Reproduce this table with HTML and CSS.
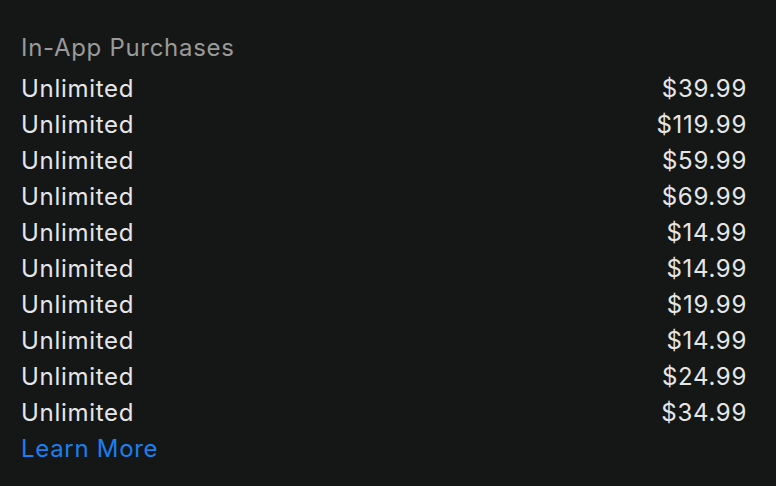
FILE: index.html
```html
<!DOCTYPE html>
<html>
<head>
<meta charset="utf-8">
<link rel="stylesheet" href="styles.css">
</head>
<body>
<section class="iap">
  <h2 class="iap-title">In-App Purchases</h2>
  <ul class="iap-list">
    <li class="iap-row"><span>Unlimited</span><span>$39.99</span></li>
    <li class="iap-row"><span>Unlimited</span><span>$119.99</span></li>
    <li class="iap-row"><span>Unlimited</span><span>$59.99</span></li>
    <li class="iap-row"><span>Unlimited</span><span>$69.99</span></li>
    <li class="iap-row"><span>Unlimited</span><span>$14.99</span></li>
    <li class="iap-row"><span>Unlimited</span><span>$14.99</span></li>
    <li class="iap-row"><span>Unlimited</span><span>$19.99</span></li>
    <li class="iap-row"><span>Unlimited</span><span>$14.99</span></li>
    <li class="iap-row"><span>Unlimited</span><span>$24.99</span></li>
    <li class="iap-row"><span>Unlimited</span><span>$34.99</span></li>
  </ul>
  <a class="iap-link" href="#">Learn More</a>
</section>
</body>
</html>
```
FILE: styles.css
```css
html, body {
  margin: 0;
  padding: 0;
  background: #151616;
  height: 100%;
}
body {
  font-family: Inter, "Noto Sans", sans-serif;
  font-size: 24px;
  letter-spacing: 0.7px;
  line-height: 36px;
  color: #e6e6e6;
}
.iap {
  padding: 30px 29px 0 21px;
}
.iap-title {
  margin: 0 0 5px;
  font-size: 24px;
  font-weight: 400;
  line-height: 36px;
  color: #999a9a;
}
.iap-list {
  list-style: none;
  margin: 0;
  padding: 0;
}
.iap-row {
  display: flex;
  justify-content: space-between;
}
.iap-link {
  display: block;
  color: #1a7ff0;
  text-decoration: none;
}
```
